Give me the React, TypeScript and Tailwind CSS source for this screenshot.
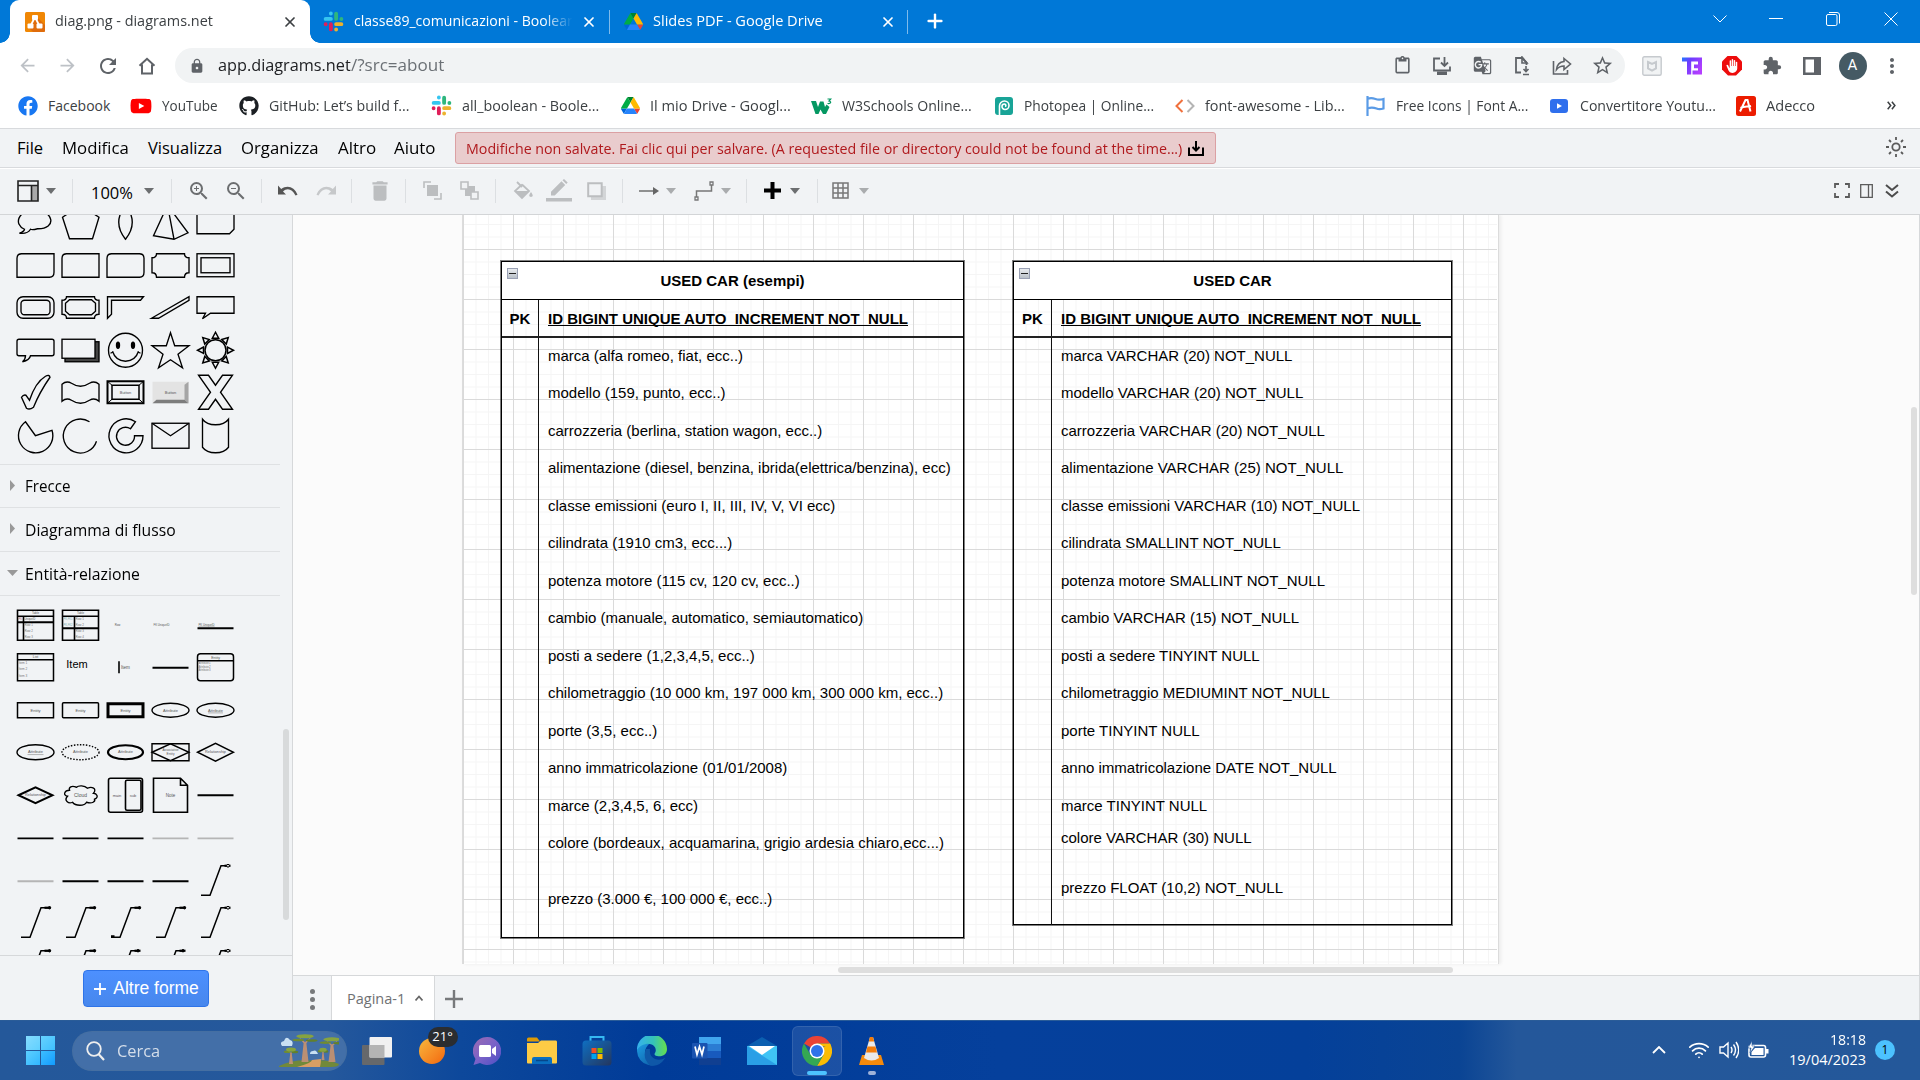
import React, { useLayoutEffect, useRef, useState } from "react";
import {
  MdArrowBack, MdArrowForward, MdRefresh, MdLock, MdContentPaste, MdStarBorder, MdExtension,
  MdZoomIn, MdZoomOut, MdDelete, MdGTranslate, MdMoreVert, MdBackHand,
} from "react-icons/md";
import { FaFacebook, FaYoutube, FaGithub } from "react-icons/fa";
import { X, Plus, Wifi } from "lucide-react";

/* Text squeezed or stretched to a known advance width. */
function Fit({ w, className = "", children }: { w: number; className?: string; children: React.ReactNode }) {
  const ref = useRef<HTMLSpanElement>(null);
  const [k, setK] = useState(1);
  useLayoutEffect(() => {
    if (ref.current) setK(w / ref.current.offsetWidth);
  }, [w]);
  return (
    <span className={"block shrink-0 whitespace-nowrap " + className} style={{ width: w }}>
      <span ref={ref} className="inline-block origin-left" style={{ transform: `scaleX(${k})` }}>
        {children}
      </span>
    </span>
  );
}

function Svg({ w, h, vb, className = "", children }: { w: number; h: number; vb: string; className?: string; children: React.ReactNode }) {
  return (
    <svg width={w} height={h} viewBox={vb} fill="none" className={"shrink-0 " + className}>
      {children}
    </svg>
  );
}

const Slack = () => (
  <Svg w={21} h={21} vb="0 0 24 24">
    <g strokeWidth="4.4" strokeLinecap="round">
      <path d="M9 2.8v.1M3 9h6" stroke="#36c5f0" />
      <path d="M15 3v6M21 9v.1" stroke="#2eb67d" />
      <path d="M15 15h6M15 21v.1" stroke="#ecb22e" />
      <path d="M9 15v6M3 15v.1" stroke="#e01e5a" />
    </g>
  </Svg>
);

const Drive = () => (
  <Svg w={19} h={17} vb="0 0 87.3 78">
    <path d="M6.6 66.85l3.85 6.65c.8 1.4 1.95 2.5 3.3 3.3L27.5 53H0c0 1.55.4 3.1 1.2 4.5z" fill="#0066da" />
    <path d="M43.65 25L29.9 1.2c-1.35.8-2.5 1.9-3.3 3.3L1.2 48.5A9.06 9.06 0 000 53h27.5z" fill="#00ac47" />
    <path d="M73.55 76.8c1.35-.8 2.5-1.9 3.3-3.3l9.25-16c.8-1.4 1.2-2.95 1.2-4.5H59.8l5.85 11.5z" fill="#ea4335" />
    <path d="M43.65 25L57.4 1.2C56.05.4 54.5 0 52.9 0H34.4c-1.6 0-3.15.45-4.5 1.2z" fill="#00832d" />
    <path d="M59.8 53H27.5L13.75 76.8c1.35.8 2.9 1.2 4.5 1.2h50.8c1.6 0 3.15-.45 4.5-1.2z" fill="#2684fc" />
    <path d="M73.4 26.5L60.7 4.5c-.8-1.4-1.95-2.5-3.3-3.3L43.65 25 59.8 53h27.45c0-1.55-.4-3.1-1.2-4.5z" fill="#ffba00" />
  </Svg>
);

/* ---------- Tab strip ---------- */
function TabStrip() {
  return (
    <header className="flex h-[43px] shrink-0 bg-[#0078d7] text-white">
      <div className="h-2.5 w-2.5 self-end bg-[radial-gradient(circle_at_0_0,#0078d7_9.5px,#fff_10px)]" />
      <div className="flex w-[300px] items-center rounded-t-[9px] bg-white pl-[15px]">
        <Svg w={20} h={20} vb="0 0 20 20">
          <rect width="20" height="20" rx="1.5" fill="#f08705" />
          <path d="M12 5l8 8v5.5a1.500 1.500 0 01-1.500 1.500H8l-5-5z" fill="#df6c0c" />
          <path d="M10 5L5.500 14M10 5l4.500 9" stroke="#fff" strokeWidth="1.800" />
          <rect x="7" y="3" width="6" height="5" rx="1" fill="#fff" />
          <rect x="2.500" y="11.500" width="6" height="5" rx="1" fill="#fff" />
          <rect x="11.500" y="11.500" width="6" height="5" rx="1" fill="#fff" />
        </Svg>
        <Fit w={158} className="ml-2.5 pb-px text-[14.5px] text-[#3c4043]">diag.png - diagrams.net</Fit>
        <X size={16} strokeWidth={2.6} className="ml-[69px] text-[#3c4043]" />
      </div>
      <div className="h-2.5 w-2.5 self-end bg-[radial-gradient(circle_at_100%_0,#0078d7_9.5px,#fff_10px)]" />
      <div className="flex w-[289px] items-center pl-[3px]">
        <Slack />
        <div className="ml-[10px] w-[223px] [mask-image:linear-gradient(to_right,#000_85%,transparent_98%)]">
          <Fit w={222} className="pb-px text-[14.5px]">classe89_comunicazioni - Boolean</Fit>
        </div>
        <X size={16} strokeWidth={2.6} className="ml-[4px]" />
      </div>
      <div className="mt-[10px] h-6 w-px bg-[#7fbbeb]" />
      <div className="flex w-[297px] items-center pl-[14px]">
        <Drive />
        <Fit w={170} className="ml-[10px] pb-px text-[14.5px]">Slides PDF - Google Drive</Fit>
        <X size={16} strokeWidth={2.6} className="ml-[57px]" />
      </div>
      <div className="mt-[10px] h-6 w-px bg-[#7fbbeb]" />
      <Plus size={22} strokeWidth={2.6} className="ml-[16px] mt-[10px]" />
      <div className="ml-auto flex h-[37px] items-center pr-[22px]">
        <Svg w={14} h={8} vb="0 0 14 8"><path d="M.5.5L7 7 13.500.5" stroke="#fff" /></Svg>
        <div className="ml-[42px] h-px w-[14px] bg-white" />
        <Svg w={14} h={14} vb="0 0 14 14" className="ml-[43px]">
          <rect x=".5" y="2.500" width="10.500" height="11" rx="1.500" stroke="#fff" />
          <path d="M3 .5h8a2.500 2.500 0 012.500 2.500v8.500" stroke="#fff" />
        </Svg>
        <Svg w={14} h={14} vb="0 0 14 14" className="ml-[44px]"><path d="M.5.5l13 13M13.500.5l-13 13" stroke="#fff" /></Svg>
      </div>
    </header>
  );
}

/* ---------- Address bar ---------- */
const cell = "flex w-10 shrink-0 items-center justify-center";
function AddressBar() {
  return (
    <div className="flex h-[45px] shrink-0 items-center bg-white pl-[7px] text-[#5f6368]">
      <div className={cell + " text-[#bdc1c6]"}><MdArrowBack size={21} /></div>
      <div className={cell + " text-[#bdc1c6]"}><MdArrowForward size={21} /></div>
      <div className={cell + " pl-px"}><MdRefresh size={24} /></div>
      <div className={cell}>
        <Svg w={18} h={18} vb="0 0 18 18"><path d="M1.500 8.800L9 1.800l7.500 7M4 7.500v9h10v-9" stroke="currentColor" strokeWidth="2" /></Svg>
      </div>
      <div className="ml-[8px] flex h-[35px] w-[1450px] items-center rounded-full bg-[#f1f3f4] pl-[14px]">
        <MdLock size={16} />
        <Fit w={133} className="ml-[13px] text-[16.5px] text-[#202124]">app.diagrams.net</Fit>
        <Fit w={93} className="text-[16.5px] text-[#6b7075]">/?src=about</Fit>
        <div className="ml-auto flex pr-[3px]">
          <div className={cell}><MdContentPaste size={19} /></div>
          <div className={cell}>
            <Svg w={20} h={20} vb="0 0 20 20"><path d="M8 2.500H2v12h16v-4" stroke="currentColor" strokeWidth="1.800" /><path d="M5 15.500h10V19H5z" fill="currentColor" /><path d="M12.500 1v8.500M9 6.500l3.500 3.500L16 6.500" stroke="currentColor" strokeWidth="1.800" /></Svg>
          </div>
          <div className={cell}><MdGTranslate size={19} /></div>
          <div className={cell}>
            <Svg w={18} h={20} vb="0 0 18 20"><path d="M8 16.500H3V2h6l4.500 4.500V9" stroke="currentColor" strokeWidth="1.800" /><path d="M9 1v6h5zM13 10v5M10.500 13l2.500 2.500 2.500-2.500M10 18.500h6" stroke="currentColor" strokeWidth="1.600" /></Svg>
          </div>
          <div className={cell}>
            <Svg w={20} h={20} vb="0 0 20 20"><path d="M1.500 5v13h14v-4" stroke="currentColor" strokeWidth="1.600" /><path d="M12 2.500l6.500 5.500-6.500 5.500v-3.500c-3.500 0-5.500 1-7.500 3.500.5-4.500 3-7.500 7.500-8z" stroke="currentColor" strokeWidth="1.600" /></Svg>
          </div>
          <div className={cell}><MdStarBorder size={23} /></div>
        </div>
      </div>
      <div className="ml-[7px] flex">
        <div className={cell}>
          <Svg w={20} h={20} vb="0 0 20 20"><rect x=".8" y=".8" width="18.400" height="18.400" rx="1.500" fill="#f1f3f4" stroke="#c6cace" strokeWidth="1.400" /><path d="M6 6l4 2 4-2v6.500l-4 2.200-4-2.200z" stroke="#c6cace" strokeWidth="2" /></Svg>
        </div>
        <div className={cell}>
          <Svg w={20} h={18} vb="0 0 20 18">
            <defs><linearGradient id="t3" x1="0" x2="1" y1="0" y2=".6"><stop stopColor="#1f7bff" /><stop offset=".35" stopColor="#6a3dff" /><stop offset="1" stopColor="#b43dff" /></linearGradient></defs>
            <path d="M0 .5h20v17h-9.500v-4H16v-2.300h-4V7.500h4V4.500H9.200v13H5v-13H0z" fill="url(#t3)" />
          </Svg>
        </div>
        <div className={cell}>
          <div className="flex h-5 w-5 items-center justify-center bg-[#ed0c0c] text-white [clip-path:polygon(30%_0,70%_0,100%_30%,100%_70%,70%_100%,30%_100%,0_70%,0_30%)]"><MdBackHand size={14} /></div>
        </div>
        <div className={cell}><MdExtension size={20} /></div>
        <div className={cell}>
          <Svg w={18} h={18} vb="0 0 18 18"><path d="M0 0h18v18H0zM2.500 2.500v13h8.500v-13z" fill="currentColor" fillRule="evenodd" /></Svg>
        </div>
        <div className={cell + " pl-px"}>
          <div className="flex h-7 w-7 items-center justify-center rounded-full bg-[#455a64] font-[Roboto] text-[15px] text-white">A</div>
        </div>
        <div className={cell + " pr-px"}><MdMoreVert size={24} /></div>
      </div>
    </div>
  );
}

/* ---------- Bookmarks ---------- */
function Bm({ iw, w, gap, children, text }: { iw: string; w: number; gap: string; children: React.ReactNode; text: string }) {
  return (
    <div className={"flex shrink-0 items-center " + gap}>
      <div className={"flex shrink-0 justify-center " + iw}>{children}</div>
      <Fit w={w} className="pb-px text-[14px]">{text}</Fit>
    </div>
  );
}
function Bookmarks() {
  return (
    <div className="flex h-[40px] shrink-0 items-center bg-white pb-[5px] pl-[8px] text-[#3c4043]">
      <Bm iw="w-10" gap="" w={62} text="Facebook"><FaFacebook size={20} className="text-[#1877f2]" /></Bm>
      <Bm iw="w-[42px]" gap="ml-[10px]" w={56} text="YouTube"><FaYoutube size={22} className="text-[#f00]" /></Bm>
      <Bm iw="w-10" gap="ml-[11px]" w={141} text="GitHub: Let’s build f..."><FaGithub size={20} className="text-[#1b1f23]" /></Bm>
      <Bm iw="w-[42px]" gap="ml-[10px]" w={137} text="all_boolean - Boole..."><Slack /></Bm>
      <Bm iw="w-10" gap="ml-[11px]" w={141} text="Il mio Drive - Googl..."><Drive /></Bm>
      <Bm iw="w-[42px]" gap="ml-[9px]" w={130} text="W3Schools Online...">
        <Svg w={21} h={16} vb="0 0 21 16">
          <path d="M0 3h5l2 6 2-5.500h3.500l1.500 5.500 1.500-2.500 3 2.500-3.500 7h-3L9.500 11.500 7.500 16h-3z" fill="#059862" />
          <path d="M16.500 1h3.200L18 3c2.500.2 2.300 3-1.500 2.500" stroke="#059862" strokeWidth="1.200" />
        </Svg>
      </Bm>
      <Bm iw="w-10" gap="ml-[12px]" w={130} text="Photopea | Online...">
        <Svg w={18} h={18} vb="0 0 18 18"><rect width="18" height="18" rx="3" fill="#18a497" /><path d="M4.500 18V9a5 5 0 015-5 4.500 4.500 0 014.500 4.500A4 4 0 0110 12.500 3 3 0 017 9.500c0-1.500 1-2.500 2.500-2.500S11.500 9 10 9.500" stroke="#fff" strokeWidth="1.600" /></Svg>
      </Bm>
      <Bm iw="w-10" gap="ml-[11px]" w={140} text="font-awesome - Lib...">
        <Svg w={20} h={14} vb="0 0 20 14"><path d="M7.500 1l-6 6 6 6" stroke="#f0703c" strokeWidth="2" /><path d="M12.500 1l6 6-6 6" stroke="#b4b4b4" strokeWidth="2" /></Svg>
      </Bm>
      <Bm iw="w-[42px]" gap="ml-[9px]" w={132} text="Free Icons | Font A...">
        <Svg w={19} h={20} vb="0 0 19 20"><path d="M1.500 0v20M1.500 3c3-1.500 5-1 8 0 3 1.200 5 .8 8 0v9.500c-3 1-5 1-7 0-3-1-5-1.500-9 0" stroke="#5a9be6" strokeWidth="2.200" /></Svg>
      </Bm>
      <Bm iw="w-[42px]" gap="ml-[10px]" w={136} text="Convertitore Youtu...">
        <Svg w={18} h={14} vb="0 0 18 14"><rect width="18" height="14" rx="3" fill="#2f6fed" /><path d="M7 4.200v5.600L12 7z" fill="#fff" /></Svg>
      </Bm>
      <Bm iw="w-10" gap="ml-[10px]" w={49} text="Adecco">
        <Svg w={20} h={20} vb="0 0 20 20"><rect width="20" height="20" rx="2.500" fill="#ec1c00" /><path d="M4 15.500L9.500 4h2l3 11.500M4.500 12c4-2 7-1 10.500-2" stroke="#fff" strokeWidth="2" /></Svg>
      </Bm>
      <Svg w={9} h={9} vb="0 0 9 9" className="ml-auto mr-[24px]"><path d="M.7.7l3 3.800-3 3.800M4.900.7l3 3.800-3 3.800" stroke="#3c4043" strokeWidth="1.500" /></Svg>
    </div>
  );
}

/* ---------- Menu bar ---------- */
function MenuBar() {
  return (
    <div className="flex h-[40px] shrink-0 items-center border-y border-[#d8dadd] bg-[#f1f3f5] pl-[17px] text-[16.500px] text-black">
      <Fit w={26}>File</Fit>
      <Fit w={67} className="ml-[19px]">Modifica</Fit>
      <Fit w={74} className="ml-[19px]">Visualizza</Fit>
      <Fit w={78} className="ml-[19px]">Organizza</Fit>
      <Fit w={38} className="ml-[19px]">Altro</Fit>
      <Fit w={42} className="ml-[18px]">Aiuto</Fit>
      <div className="ml-[19px] flex h-8 w-[761px] items-center rounded-[3px] border border-[#dba0a3] bg-[#e9cccd] pl-[10px]">
        <Fit w={716} className="pt-px text-[14.500px] text-[#b0191d]">Modifiche non salvate. Fai clic qui per salvare. (A requested file or directory could not be found at the time...)</Fit>
        <Svg w={16} h={15} vb="0 0 16 15" className="ml-[6px]"><path d="M1 6.500V14h14V6.500M8 0v9M4.500 6L8 9.500 11.500 6" stroke="#000" strokeWidth="2" /></Svg>
      </div>
      <Svg w={20} h={20} vb="0 0 20 20" className="mb-[2px] ml-auto mr-[14px]">
        <circle cx="10" cy="10" r="3.700" stroke="#5a5a5a" strokeWidth="1.800" />
        <path d="M10 0v3M10 17v3M0 10h3M17 10h3M3 3l2 2M15 15l2 2M3 17l2-2M15 5l2-2" stroke="#5a5a5a" strokeWidth="1.800" />
      </Svg>
    </div>
  );
}

/* ---------- Toolbar ---------- */
const Caret = ({ c }: { c: string }) => (
  <Svg w={10} h={6} vb="0 0 10 6" className={c}><path d="M0 0h10L5 6z" fill="currentColor" /></Svg>
);
const Sep = ({ c }: { c: string }) => <div className={"h-6 w-px shrink-0 bg-[#dcdfe2] " + c} />;

function Toolbar() {
  return (
    <div className="flex h-[47px] shrink-0 items-center border-b border-t border-b-[#d3d5d7] border-t-white bg-[#f1f3f5] pb-[2px] pl-[17px] text-[#6c6e70]">
      <Svg w={22} h={22} vb="0 0 22 22"><rect x="15" y="5" width="6" height="16" fill="#a9a9a9" /><path d="M1 1h20v20H1zM1 5.500h20M14.500 5.500V21" stroke="#222" strokeWidth="1.600" /></Svg>
      <Caret c="ml-[7px]" />
      <Sep c="ml-[16px]" />
      <Fit w={42} className="ml-[18px] pt-[6px] text-[16.500px] text-black">100%</Fit>
      <Caret c="ml-[11px]" />
      <Sep c="ml-[17px]" />
      <MdZoomIn size={24} className="ml-[15px] shrink-0" />
      <MdZoomOut size={24} className="ml-[13px] shrink-0" />
      <Sep c="ml-[13px]" />
      <Svg w={20} h={13} vb="0 0 20 12" className="ml-[16px]"><path d="M0 1v9h8L5 7c4-4 9-3 12.500 4l2-.7C16.500 2 9 0 3.200 4.500z" fill="#555" /></Svg>
      <Svg w={20} h={13} vb="0 0 20 12" className="ml-[18px]"><path d="M20 1v9h-8l3-3C11 3 6 4 2.500 11l-2-.7C3.500 2 11 0 16.800 4.500z" fill="#c6c8ca" /></Svg>
      <Sep c="ml-[15px]" />
      <div className="flex items-center text-[#bcbec0]">
        <MdDelete size={26} className="ml-[15px]" />
        <Sep c="ml-[12px]" />
        <Svg w={19} h={19} vb="0 0 19 19" className="ml-[17px]"><rect x="4" y="4" width="11" height="11" fill="currentColor" /><path d="M1 7V1h7M18 12v6h-7" stroke="currentColor" strokeWidth="1.600" /></Svg>
        <Svg w={19} h={19} vb="0 0 19 19" className="ml-[18px]"><path d="M5 5h10v10H5z" fill="currentColor" /><path d="M1 1h7v7H1zM11 11h7v7h-7z" stroke="currentColor" strokeWidth="1.600" fill="#f1f3f5" /></Svg>
        <Sep c="ml-[16px]" />
        <Svg w={20} h={19} vb="0 0 20 19" className="ml-[17px]"><path d="M4 1l5 5M9 3.500L2 10l7 7 7-7-7-6.500" stroke="currentColor" strokeWidth="1.800" /><path d="M2 10h14l-7 7zM18 11c3 4 1.500 5 0 5s-3-1 0-5z" fill="currentColor" /></Svg>
        <Svg w={26} h={23} vb="0 0 26 23" className="ml-[13px]"><path d="M0 19h26v3.500H0zM5 16.500v-3.700L15.500 2.300l3.700 3.700L8.700 16.500zM16.500 1.300L18 0l3.700 3.500-1.500 1.500z" fill="currentColor" /></Svg>
        <Svg w={19} h={18} vb="0 0 19 18" className="ml-[15px]"><path d="M4 4h15v14H4z" fill="#d3d5d7" /><path d="M1.200 1.200h13.500v13H1.200z" stroke="currentColor" strokeWidth="2" fill="#f1f3f5" /></Svg>
        <Sep c="ml-[16px]" />
      </div>
      <Svg w={20} h={8} vb="0 0 20 8" className="ml-[16px]"><path d="M0 4h17" stroke="#777" strokeWidth="1.600" /><path d="M14 0l6 4-6 4z" fill="#666" /></Svg>
      <Caret c="ml-[7px] text-[#aaacae]" />
      <Svg w={20} h={20} vb="0 0 20 20" className="ml-[18px]"><path d="M2.500 16v-6h15V4" stroke="#777" strokeWidth="1.500" /><path d="M1 16h3v3H1zM16 1h3v3h-3z" stroke="#777" strokeWidth="1.300" /></Svg>
      <Caret c="ml-[7px] text-[#aaacae]" />
      <Sep c="ml-[15px]" />
      <Svg w={17} h={17} vb="0 0 17 17" className="ml-[17px]"><path d="M8.500 0v17M0 8.500h17" stroke="#000" strokeWidth="4" /></Svg>
      <Caret c="ml-[9px]" />
      <Sep c="ml-[17px]" />
      <Svg w={17} h={17} vb="0 0 17 17" className="ml-[14px]"><path d="M1 1h15v15H1zM6 1v15M11 1v15M1 6h15M1 11h15" stroke="#777" strokeWidth="1.500" /></Svg>
      <Caret c="ml-[10px] text-[#aaacae]" />
      <div className="ml-auto flex items-center pr-[21px]">
        <Svg w={16} h={15} vb="0 0 16 15"><path d="M1 5V1h4M11 1h4v4M15 10v4h-4M5 14H1v-4" stroke="#5c5c5c" strokeWidth="1.800" /></Svg>
        <Svg w={13} h={14} vb="0 0 13 14" className="ml-[10px]"><path d="M.7.7h11.600v12.600H.7zM8.500 1v12" stroke="#5c5c5c" strokeWidth="1.300" /></Svg>
        <Svg w={14} h={14} vb="0 0 14 14" className="ml-[12px]"><path d="M1 1l6 5 6-5M1 7.500l6 5 6-5" stroke="#4c4c4c" strokeWidth="2" /></Svg>
      </div>
    </div>
  );
}

/* ---------- Shape palette ---------- */
const T = ({ x = 0, y = 1.500, s = 4, u = false, a = "middle", c = "#555", children }: { x?: number; y?: number; s?: number; u?: boolean; a?: "start" | "middle"; c?: string; children: string }) => (
  <text x={x} y={y} fontSize={s} fill={c} stroke="none" textAnchor={a} textDecoration={u ? "underline" : undefined}>{children}</text>
);

const sunRays = Array.from({ length: 8 }, (_, i) => <path key={i} d="M-3.200 -12L0 -18L3.200 -12Z" transform={`rotate(${i * 45})`} />);

const basic: React.ReactNode[] = [
  <path d="M-11 7C-22 2-18-12 0-12S22 7 2 6.500Q-3 8-5 7Q-8 12-16 11Q-11 9-11 7Z" />,
  <path d="M-18-5L0-17 18.500-5 12 16.500H-11Z" />,
  <path d="M0-17Q13.500 0 0 17Q-13.500 0 0-17Z" />,
  <path d="M-3-17L-17 13.500 3.500 17 17.500 10.500ZM-3-17L3.500 17" />,
  <path d="M-18.500-11H18.500V7L14 11.500H-18.500Z" />,
  <path d="M-14-11.500H18.500V7Q18.500 12 14 12H-18.500V-7Q-18.500-11.500-14-11.500Z" />,
  <path d="M-14-11.500H18.500V12H-18.500V-7Q-18.500-11.500-14-11.500Z" />,
  <path d="M-14-11.500H14Q18.500-11.500 18.500-7V7Q18.500 12 14 12H-18.500V-7Q-18.500-11.500-14-11.500Z" />,
  <path d="M-14-11.500H14Q14-7.500 18.500-7.500V7.500Q14 7.500 14 12H-14Q-14 7.500-18.500 7.500V-7.500Q-14-7.500-14-11.500Z" />,
  <g><rect x="-18.500" y="-11.500" width="37" height="23" /><rect x="-14.500" y="-7.500" width="29" height="15" /></g>,
  <g><rect x="-18.500" y="-10.500" width="37" height="21.500" rx="6" /><rect x="-14.500" y="-7" width="29" height="14.500" rx="3.500" /></g>,
  <g><path d="M-14-10.500H14Q14-7 18.500-7V7Q14 7 14 11H-14Q-14 7-18.500 7V-7Q-14-7-14-10.500Z" /><path d="M-11-7.500H11L15-4V4L11 7.500H-11L-15 4V-4Z" /></g>,
  <path d="M-18-10.500H18L15-7H-14V7L-18 11Z" />,
  <path d="M-19 11L18.500-10.500V-7L-12 11Z" />,
  <path d="M-18.500-10.500H18.500V6H-5L-13 11.500-10 6H-18.500Z" />,
  <path d="M-16.500-11H16.500Q18.500-11 18.500-9V3.500Q18.500 5.500 16.500 5.500H-5Q-6 10-13 11.500Q-10 9-10 5.500H-16.500Q-18.500 5.500-18.500 3.500V-9Q-18.500-11-16.500-11Z" />,
  <g><rect x="-15.500" y="-8.500" width="34" height="20" fill="#444" /><rect x="-18.500" y="-11" width="33" height="19" fill="#f1f3f5" /></g>,
  <g><circle r="17" cy="0" /><ellipse cx="-7.500" cy="-5" rx="1.500" ry="3" fill="#000" /><ellipse cx="7.500" cy="-5" rx="1.500" ry="3" fill="#000" /><path d="M-13 1Q-10 10.500 0 11Q10 10.500 13 1M-15 3L-12 1.500M15 3L12 1.500" /></g>,
  <path d="M0-17.500L4.200-4.500H18.500L7.500 4 12 17.500 0 9.500-12 17.500-7.500 4-18.500-4.500H-4.200Z" />,
  <g strokeWidth="1.500">{sunRays}<circle r="10.500" /></g>,
  <path d="M-14 5Q-12 2-9.500 3L-6 8Q0-10 10-16Q14-18 14.500-15Q4 0-2 15Q-6 18-9 16Z" />,
  <path d="M-18.500-8Q-14-12-9-9Q0-3 9-9Q14-12 18.500-8V9Q14 5 9 8Q0 14-9 8Q-14 5-18.500 9Z" />,
  <g strokeWidth="2"><rect x="-18" y="-11" width="36" height="22" /><rect x="-13.500" y="-7" width="27" height="14" strokeWidth="1.500" /><path d="M-18-11l4.500 4M18-11l-4.500 4M-18 11l4.500-4M18 11l-4.500-4" strokeWidth="1" /><T y={1.500}>Button</T></g>,
  <g stroke="none"><rect x="-18" y="-10.500" width="36" height="21.500" fill="#e3e3e3" /><path d="M18-10.500V11L14 7.500V-7.500Z" fill="#a5a5a5" /><path d="M-18 11H18L14 7.500H-14Z" fill="#7d7d7d" /><T y={1.500}>Button</T></g>,
  <path d="M-17-17H-7L0-7 7-17H17L5 0 17 17H7L0 7-7 17H-17L-5 0Z" />,
  <path d="M0 0.500L-10-13.500A17.200 17.200 0 1 0 16.500-5Z" />,
  <path d="M9-13.500A17 17 0 1 0 16 6" />,
  <path d="M10-13.500A17 17 0 1 0 17.500 0.500H9A9 9 0 1 1 5-6.500Z" />,
  <g><rect x="-18.500" y="-12" width="37" height="25" /><path d="M-18.500-12L0 .5 18.500-12" /></g>,
  <path d="M-13-16Q-9-10.500 0-10.500T13-16V12Q9 17.500 0 17.500T-13 12Z" />,
];

const hline = (y = 0, w = 1.800, c = "#000") => <path d={`M-18 ${y}H18`} stroke={c} strokeWidth={w} />;
const zig = (end: "dot" | "two" | "ring", both = false) => (
  <g>
    <path d="M-14.500 15H-5.500L5.500-14.500H12.500" strokeWidth="1.500" />
    <path d="M9-14.500H15" strokeWidth="2.200" />
    <circle cx={end === "dot" ? 14 : 12.500} cy="-14.500" r={end === "ring" ? 1.400 : 1.200} fill={end === "ring" ? "#f1f3f5" : "#000"} strokeWidth="1" />
    {both && <path d="M-14.500 14.300H-11" strokeWidth="2.600" />}
  </g>
);

const er: React.ReactNode[] = [
  <g strokeWidth="1.600"><path d="M-18-15H18V15H-18Z" /><path d="M-18-9H18M-12-9V15" /><path d="M-18-3H18" strokeWidth="2" /><T y={-10.800} s={3}>Table</T><T x={-17} y={-5} s={2.600} a="start" c="#a66">PK</T><T x={-11} y={-5} s={2.600} u a="start">UniqueID</T><T x={-11} y={0.500} s={3} a="start" c="#777">Row 1</T><T x={-11} y={6.500} s={3} a="start" c="#777">Row 2</T><T x={-11} y={12.500} s={3} a="start" c="#777">Row 3</T></g>,
  <g strokeWidth="1.600"><path d="M-18-15H18V15H-18Z" /><path d="M-18-9H18M-6-9V15" /><path d="M-18 3H18" strokeWidth="2" /><T y={-10.800} s={3}>Table</T><T x={-17} y={-5} s={2.600} a="start" c="#7aa">PK,FK1</T><T x={-17} y={1} s={2.600} a="start" c="#7aa">PK,FK2</T><T x={-5} y={-5} s={3} a="start" c="#777">Row 1</T><T x={-5} y={1} s={3} a="start" c="#777">Row 2</T><T x={-5} y={6.500} s={3} a="start" c="#777">Row 3</T><T x={-5} y={12.500} s={3} a="start" c="#777">Row 4</T></g>,
  <T x={-8} y={0.500} s={2.800}>Row</T>,
  <T x={-9} y={0.500} s={2.800}>FK   UniqueID</T>,
  <g><path d="M-18 3H18" strokeWidth="1.800" /><T x={-9} y={0.500} s={2.800} u>PK UniqueID</T></g>,
  <g strokeWidth="1.500"><path d="M-18-13.500H18V13.500H-18ZM-18-7.500H18" /><T y={-9.200} s={3.500}>List</T><T x={-17} y={-3} s={3.200} a="start" c="#777">Item 1</T><T x={-17} y={3} s={3.200} a="start" c="#777">Item 2</T><T x={-17} y={10} s={3.200} a="start" c="#777">Item 3</T></g>,
  <T x={-3.500} y={0.500} s={11} c="#000">Item</T>,
  <g><path d="M-6.500-6V6" strokeWidth="1.600" /><T x={-4.500} y={2} s={4.600} a="start">Item</T></g>,
  hline(0.500),
  <g strokeWidth="1.500"><rect x="-18" y="-13.500" width="36" height="27" rx="3" /><path d="M-18-6.500H18" /><T y={-8.500} s={3.500}>Entity</T><T x={-17} y={-3} s={2.800} a="start" c="#777">Attribute1</T><T x={-17} y={0.500} s={2.800} a="start" c="#777">Attribute2</T><T x={-17} y={4} s={2.800} a="start" c="#777">Attribute3</T></g>,
  <g strokeWidth="1.500"><rect x="-18" y="-7.500" width="36" height="15" /><T>Entity</T></g>,
  <g strokeWidth="1.500"><rect x="-18" y="-7.500" width="36" height="15" rx="1" /><T>Entity</T></g>,
  <g><rect x="-17.500" y="-6.500" width="35" height="13" strokeWidth="3" /><T>Entity</T></g>,
  <g strokeWidth="1.400"><ellipse rx="18.500" ry="7" /><T>Attribute</T></g>,
  <g strokeWidth="1.400"><ellipse rx="18.500" ry="7" /><T u>Attribute</T></g>,
  <g strokeWidth="1.400"><ellipse rx="18.500" ry="7.500" /><T y={1}>Attribute</T><path d="M-8 2.300H8" stroke="#999" strokeWidth=".7" /></g>,
  <g strokeWidth="1.400"><ellipse rx="18.500" ry="7.500" strokeDasharray="1.500 1.500" /><T y={1}>Attribute</T></g>,
  <g strokeWidth="2.200"><ellipse rx="17.500" ry="7" /><T y={1}>Attribute</T></g>,
  <g strokeWidth="1.400"><path d="M-18.500-8.500H18.500V8.500H-18.500Z" /><path d="M-18.500 0L0-8.500 18.500 0 0 8.500Z" /><T y={-1} s={3.200}>Associative</T><T y={3} s={3.200}>Entity</T></g>,
  <g strokeWidth="1.400"><path d="M-18 0L0-9 18 0 0 9Z" /><T y={1} s={3.800}>Relationship</T></g>,
  <g strokeWidth="2"><path d="M-17 0L0-8 17 0 0 8Z" /><T y={1} s={3.800}>Relationship</T></g>,
  <g><path d="M-11-5C-16-5-18 0-13 1C-17 5-12 9-8 7C-5 11 4 11 6 7C12 9 15 6 14 4C19 2 16-2 13-2C17-7 11-9 7-7C4-10-2-10-4-8C-9-10-12-8-11-5Z" /><T s={5}>Cloud</T></g>,
  <g strokeWidth="1.600"><rect x="-17" y="-17" width="34" height="34" rx="2" /><rect x="0" y="-15" width="15.500" height="30" rx="1.500" /><T x={-8.500}>main</T><T x={7.500}>sub</T></g>,
  <g strokeWidth="1.600"><path d="M-17-17H10L17-10V17H-17ZM10-17V-10H17" /><T s={4.500}>Note</T></g>,
  hline(),
  hline(1.200), hline(1.200), hline(1.200), hline(1.200, 1.800, "#b5b5b5"), hline(1.200, 1.800, "#b5b5b5"),
  hline(1, 1.800, "#b5b5b5"), hline(1, 2.200), hline(1, 2.200), hline(1, 2.200),
  zig("ring"),
  zig("dot"), zig("dot"), zig("dot", true), zig("dot"), zig("ring"),
  zig("dot"), zig("dot"), zig("two"), zig("two"), zig("ring"),
];

function Palette({ items }: { items: React.ReactNode[] }) {
  return (
    <div className="grid w-[225px] shrink-0 auto-rows-[42.5px] grid-cols-5 font-['Liberation_Sans']">
      {items.map((s, i) => (
        <svg key={i} viewBox="-22.5 -21.25 45 42.5" className="h-[42.5px] w-[45px] overflow-visible" fill="none" stroke="#000" strokeWidth="1.350">{s}</svg>
      ))}
    </div>
  );
}

function Section({ title, w, open = false, c }: { title: string; w: number; open?: boolean; c: string }) {
  return (
    <div className={"flex w-[280px] shrink-0 items-center border-t border-[#dfe1e3] pl-[7px] " + c}>
      <div className="flex w-[18px] shrink-0 pb-[3px]">
        {open
          ? <Svg w={11} h={6} vb="0 0 11 6"><path d="M0 0h11L5.500 6z" fill="#999" /></Svg>
          : <Svg w={9} h={11} vb="-3 0 9 11"><path d="M0 0v11l5-5.500z" fill="#999" /></Svg>}
      </div>
      <Fit w={w} className="text-[15.500px] font-medium text-black">{title}</Fit>
    </div>
  );
}

function Sidebar() {
  return (
    <aside className="flex w-[293px] shrink-0 flex-col border-r border-[#d6d8da] bg-[#f1f3f5]">
      <div className="flex h-[740px] shrink-0 overflow-hidden">
        <div className="flex w-[283px] flex-col">
          <div className="-mt-[13.75px] h-[263px] shrink-0 pl-[13px]"><Palette items={basic} /></div>
          <Section title="Frecce" w={46} c="h-[43px] pt-[1px]" />
          <Section title="Diagramma di flusso" w={151} c="h-[44px] pt-[1px]" />
          <Section title="Entità-relazione" w={115} open c="h-[44px] pt-[1px]" />
          <div className="w-[280px] border-t border-[#dfe1e3] pl-[13px] pt-[7.500px]"><Palette items={er} /></div>
        </div>
        <div className="mt-[514px] h-[191px] w-[6px] rounded-full bg-[#d8dadb]" />
      </div>
      <div className="flex flex-1 justify-center border-t border-[#d6d8da] pt-[14px]">
        <button className="flex h-[37px] w-[126px] items-center rounded-[4px] border border-[#2f74e8] bg-gradient-to-b from-[#4d90fe] to-[#4787ed] pl-[10px] font-['Liberation_Sans'] text-[17.500px] text-white">
          <Svg w={12} h={12} vb="0 0 12 12"><path d="M6 0v12M0 6h12" stroke="#fff" strokeWidth="1.800" /></Svg>
          <Fit w={86} className="ml-[7px] pb-px">Altre forme</Fit>
        </button>
      </div>
    </aside>
  );
}

/* ---------- Canvas ---------- */
const left = [
  "marca (alfa romeo, fiat, ecc..)", "modello (159, punto, ecc..)", "carrozzeria (berlina, station wagon, ecc..)",
  "alimentazione (diesel, benzina, ibrida(elettrica/benzina), ecc)", "classe emissioni (euro I, II, III, IV, V, VI ecc)",
  "cilindrata (1910 cm3, ecc...)", "potenza motore (115 cv, 120 cv, ecc..)", "cambio (manuale, automatico, semiautomatico)",
  "posti a sedere (1,2,3,4,5, ecc..)", "chilometraggio (10 000 km, 197 000 km, 300 000 km, ecc..)", "porte (3,5, ecc..)",
  "anno immatricolazione (01/01/2008)", "marce (2,3,4,5, 6, ecc)", "colore (bordeaux, acquamarina, grigio ardesia chiaro,ecc...)",
  "prezzo (3.000 €, 100 000 €, ecc..)",
];
const right = [
  "marca VARCHAR (20) NOT_NULL", "modello VARCHAR (20) NOT_NULL", "carrozzeria VARCHAR (20) NOT_NULL",
  "alimentazione VARCHAR (25) NOT_NULL", "classe emissioni VARCHAR (10) NOT_NULL", "cilindrata SMALLINT NOT_NULL",
  "potenza motore SMALLINT NOT_NULL", "cambio VARCHAR (15) NOT_NULL", "posti a sedere TINYINT NULL",
  "chilometraggio MEDIUMINT NOT_NULL", "porte TINYINT NULL", "anno immatricolazione DATE NOT_NULL", "marce TINYINT NULL",
  "colore VARCHAR (30) NULL", "prezzo FLOAT (10,2) NOT_NULL",
];

function Entity({ title, rows, c, pk, tall, last }: { title: string; rows: string[]; c: string; pk: string; tall: string; last: string }) {
  return (
    <div className={"absolute flex flex-col border border-black font-['Liberation_Sans'] text-[15px] text-black outline outline-[0.5px] outline-[#000]/50 " + c}>
      <div className="relative flex h-[37px] shrink-0 items-center justify-center bg-white font-bold">
        <span className="pt-px">{title}</span>
        <div className="absolute left-[5px] top-[6px] flex h-[11px] w-[11px] items-center justify-center border border-[#9aa1b5] bg-gradient-to-b from-[#e9ecef] to-[#b9c0c8]">
          <div className="h-px w-[7px] bg-[#222]" />
        </div>
      </div>
      <div className="flex h-[39px] shrink-0 border-b-2 border-t border-b-[#222] border-t-black font-bold">
        <div className={"flex items-center justify-center border-r-[1.500px] border-[#111] pt-[2px] " + pk}>PK</div>
        <div className="flex items-center whitespace-nowrap pl-[9px] pt-[2px] underline underline-offset-1 [text-decoration-skip-ink:none]">ID BIGINT UNIQUE AUTO_INCREMENT NOT_NULL</div>
      </div>
      <div className="flex flex-1">
        <div className={"shrink-0 border-r-[1.500px] border-[#111] " + pk} />
        <div className="-mt-px flex flex-col pl-[9px]">
          {rows.map((r, i) => (
            <div key={i} className={"flex shrink-0 items-center whitespace-nowrap " + (i === 13 ? tall : i === 14 ? last : "h-[37.5px]")}>{r}</div>
          ))}
        </div>
      </div>
    </div>
  );
}

function Canvas() {
  return (
    <div className="relative h-[760px] shrink-0 overflow-hidden bg-[#fbfbfb]">
      <div className="absolute left-[169px] top-0 h-[749px] w-[1037px] border-x border-[#dcdcdc] bg-white shadow-[2px_0_3px_#ececec]">
        <div className="h-full w-[1034px] bg-[linear-gradient(#dadada_1px,transparent_1px),linear-gradient(90deg,#dadada_1px,transparent_1px),linear-gradient(#f5f5f5_1px,transparent_1px),linear-gradient(90deg,#f5f5f5_1px,transparent_1px)] bg-[length:50px_50px,50px_50px,12.5px_12.5px,12.5px_12.5px] bg-[position:0_34px,0_0,0_34px,0_0]" />
      </div>
      <Entity title="USED CAR (esempi)" rows={left} c="left-[208px] top-[46px] h-[677px] w-[463px]" pk="w-[37px]" tall="h-[37.5px]" last="h-[75px]" />
      <Entity title="USED CAR" rows={right} c="left-[720px] top-[46px] h-[664px] w-[439px]" pk="w-[38px]" tall="h-[27px]" last="h-[73px]" />
      <div className="absolute left-[545px] top-[752px] h-[6px] w-[615px] rounded-full bg-[#dedede]" />
      <div className="absolute right-[2px] top-[192px] h-[188px] w-[6px] rounded-full bg-[#dedede]" />
    </div>
  );
}

function PageBar() {
  return (
    <div className="flex flex-1 border-t border-[#d6d8da] bg-[#f1f3f5] text-[#6f7173]">
      <div className="flex w-[38px] flex-col items-center justify-center gap-[3px] pt-[2px]">
        <div className="h-[5px] w-[5px] rounded-full bg-[#77797b]" />
        <div className="h-[5px] w-[5px] rounded-full bg-[#77797b]" />
        <div className="h-[5px] w-[5px] rounded-full bg-[#77797b]" />
      </div>
      <div className="flex w-[104px] items-center border-x border-[#d6d8da] bg-white pl-[15px] pt-[2px]">
        <Fit w={58} className="text-[14.500px]">Pagina-1</Fit>
        <Svg w={8} h={6} vb="0 0 8 6" className="mb-[3px] ml-[10px]"><path d="M.5 5.500L4 1.500l3.500 4" stroke="#666" strokeWidth="1.700" /></Svg>
      </div>
      <Svg w={18} h={18} vb="0 0 18 18" className="ml-[10px] mt-[14px]"><path d="M9 0v18M0 9h18" stroke="#77797b" strokeWidth="2.400" /></Svg>
    </div>
  );
}

/* ---------- Taskbar ---------- */
const tb = "flex w-[55px] shrink-0 items-center justify-center";
function Tree({ x, y, h, w }: { x: number; y: number; h: number; w: number }) {
  return (
    <g transform={`translate(${x} ${y})`}>
      <path d={`M${-w} 0L${-w * 0.4} ${-h * 0.75}L${-w * 1.8} ${-h}L0 ${-h * 0.8}L${w * 1.8} ${-h}L${w * 0.4} ${-h * 0.75}L${w} 0Z`} fill="#bb8f73" />
      <ellipse cx={-w * 1.9} cy={-h * 0.88} rx={w * 1.7} ry="1.300" fill="#6f8c31" />
      <ellipse cx={w * 1.9} cy={-h * 0.86} rx={w * 1.7} ry="1.300" fill="#62802c" />
      <ellipse cx="0" cy={-h * 1.03} rx={w * 2.500} ry="2" fill="#86a340" />
    </g>
  );
}
function Taskbar() {
  return (
    <footer className="flex h-[60px] shrink-0 items-center border-t border-[#2a5c98] bg-[linear-gradient(90deg,#24589a_0%,#25589c_17%,#0d489b_24%,#003b98_34%,#05409c_52%,#04409a_68%,#0a4494_76%,#24579a_79%,#24589a_100%)] pl-[26px] text-white">
      <div className="grid h-[29px] w-[29px] grid-cols-2 gap-px">
        <div className="bg-gradient-to-br from-[#84dcff] to-[#5fd0ff]" /><div className="bg-gradient-to-br from-[#66d2ff] to-[#3dbfff]" />
        <div className="bg-gradient-to-br from-[#5bcfff] to-[#2fb6ff]" /><div className="bg-gradient-to-br from-[#3cbdff] to-[#0f9cff]" />
      </div>
      <div className="ml-[17px] flex h-10 w-[275px] items-center overflow-hidden rounded-full border border-[#47709f]/60 bg-[#436fa8] pl-[13px]">
        <Svg w={19} h={20} vb="0 0 19 20"><circle cx="8" cy="8" r="6.800" stroke="#eee" strokeWidth="1.800" /><path d="M12.500 13l5.500 6" stroke="#eee" strokeWidth="2.200" /></Svg>
        <Fit w={43} className="ml-[12px] text-[16px] text-[#d5deea]">Cerca</Fit>
        <Svg w={60} h={34} vb="0 0 60 34" className="ml-auto mr-[7px]">
          <path d="M0 32Q14 25 32 26.500Q50 25 60 30Q60 33 52 33H0Z" fill="#71893a" />
          <path d="M18 33Q33 29 33 26L42 25Q42 29 41 33Z" fill="#d99e63" />
          <path d="M3 12q-3-4 2-5 2-6 6-1 4 1 2 6zM31 20q0-3 3-3 3-2 5 3z" fill="#c9e0f2" />
          <Tree x={12} y={30} h={14} w={2} /><Tree x={26} y={28} h={25} w={3.500} /><Tree x={44} y={26} h={10} w={1.500} /><Tree x={53} y={28} h={22} w={3.500} />
        </Svg>
      </div>
      <div className="flex h-full pl-[2px]">
        <div className={tb}>
          <Svg w={30} h={28} vb="0 0 30 28"><rect y="8" width="22.500" height="20" rx="1" fill="#66686b" /><rect x="7.500" width="22.500" height="20.500" rx="1" fill="#f1f1f1" /><path d="M7.500 8h15v12.500h-15z" fill="#b4b4b4" /></Svg>
        </div>
        <div className={tb}>
          <div className="relative flex h-[26px] w-[26px] rounded-full bg-gradient-to-br from-[#f6b73c] to-[#f2660a]">
            <div className="absolute -right-[13px] -top-[11px] flex h-[20px] w-[30px] items-center justify-center rounded-full bg-[#2b2d30] text-[13px] leading-none">21°</div>
          </div>
        </div>
        <div className={tb}>
          <Svg w={28} h={28} vb="0 0 28 28">
            <defs><linearGradient id="chat" x1="0" x2="1" y1="0" y2="1"><stop stopColor="#9b6bb0" /><stop offset=".5" stopColor="#7a62c8" /><stop offset="1" stopColor="#4b4fc4" /></linearGradient></defs>
            <path d="M14 0a14 14 0 11-7 26l-6.500 2L2.500 22A14 14 0 0114 0z" fill="url(#chat)" /><rect x="6" y="8" width="12" height="12" rx="1.500" fill="#fff" /><path d="M19 12l4-3v10l-4-3z" fill="#fff" />
          </Svg>
        </div>
        <div className={tb}>
          <Svg w={30} h={28} vb="0 0 30 28"><path d="M0 2q0-1.500 1.500-1.500H10l3 4H0z" fill="#dd9a05" /><path d="M0 6h11l3-2.500h15q1 0 1 1.500v20.500q0 1-1 1H1q-1 0-1-1z" fill="#fdcb45" /><path d="M5 27v-5q0-2 2-2h16q2 0 2 2v5z" fill="#0a6fc0" /><path d="M9 23.500h12" stroke="#06468a" strokeWidth="1.500" /></Svg>
        </div>
        <div className={tb}>
          <Svg w={30} h={30} vb="0 0 30 30">
            <defs><linearGradient id="store" x1="0" x2="1" y1="0" y2="1"><stop stopColor="#0f6fc2" /><stop offset="1" stopColor="#24365e" /></linearGradient></defs>
            <path d="M8.500 6V1h13v5" stroke="#35b8f2" strokeWidth="2" /><rect x=".5" y="4.500" width="29" height="25" rx="3.500" fill="url(#store)" /><path d="M9.500 12h5v5h-5z" fill="#f25022" /><path d="M15.500 12h5v5h-5z" fill="#7fba00" /><path d="M9.500 18h5v5h-5z" fill="#00a4ef" /><path d="M15.500 18h5v5h-5z" fill="#ffb900" />
          </Svg>
        </div>
        <div className={tb}>
          <Svg w={30} h={30} vb="0 0 30 30">
            <defs>
              <linearGradient id="e1" x1="0" x2="1"><stop stopColor="#36b0ee" /><stop offset=".55" stopColor="#35c3b8" /><stop offset="1" stopColor="#66e04a" /></linearGradient>
              <linearGradient id="e2" x1="0" x2="1" y1="0" y2="1"><stop stopColor="#1ea0e4" /><stop offset="1" stopColor="#0b4f9c" /></linearGradient>
            </defs>
            <path d="M0 15C0 7 6 4 13 7C7 12 6 20 12 24C17 27 24 26 28 22A15 15 0 010 15z" fill="url(#e2)" />
            <path d="M0 14A15 15 0 0130 13C30 19 25 21 20 20C17 19.500 17 18 18.500 16C20 11 15 7 9 8Q3 9 0 14z" fill="url(#e1)" />
            <path d="M9 13Q5 22 13 29.500Q23 31 28 22Q23 25 18 23Q12 20 13 13Z" fill="#0f58a8" />
          </Svg>
        </div>
        <div className={tb}>
          <Svg w={29} h={28} vb="0 0 29 28"><path d="M7 0h22v7H7z" fill="#41a5ee" /><path d="M7 7h22v7H7z" fill="#2b7cd3" /><path d="M7 14h22v7H7z" fill="#185abd" /><path d="M7 21h22v7H7z" fill="#103f91" /><rect y="6" width="15.500" height="15.500" rx="1" fill="#1a53b0" /><path d="M3 9.500l2 8 2.500-8 2.500 8 2-8" stroke="#fff" strokeWidth="1.700" /></Svg>
        </div>
        <div className={tb}>
          <Svg w={30} h={28} vb="0 0 30 28"><path d="M0 9L15 0l15 9z" fill="#0b5fb0" /><path d="M0 9h30v19H0z" fill="#3fc4f5" /><path d="M0 9l30 19H0z" fill="#2a9fe6" /><path d="M2 9h26L15 18z" fill="#fff" /></Svg>
        </div>
        <div className={tb}>
          <div className="flex h-[50px] w-[50px] flex-col items-center rounded-md border border-white/10 bg-white/10 pt-[9px]">
            <Svg w={30} h={30} vb="0 0 30 30">
              <path d="M15 15L2 7.500A15 15 0 0128 7.500H15z" fill="#ea4335" /><path d="M15 15L28 7.500A15 15 0 0115 30l6.500-11.200z" fill="#fbbc04" /><path d="M2 7.500A15 15 0 0015 30l6.500-11.200L15 22 8.500 18.800z" fill="#34a853" /><path d="M15 7.500h13l1 3H15z" fill="#fbbc04" /><circle cx="15" cy="15" r="7.500" fill="#fff" /><circle cx="15" cy="15" r="6" fill="#2f73ea" />
            </Svg>
            <div className="mt-[5px] h-[4px] w-5 shrink-0 rounded-full bg-[#4cc2ff]" />
          </div>
        </div>
        <div className={tb}>
          <div className="flex flex-col items-center pt-[10px]">
            <Svg w={25} h={28} vb="0 0 25 28"><path d="M3 18h19l3 10H0z" fill="#f58a0c" /><path d="M11 0h3l6 21Q12.500 26 5 21z" fill="#e9e9e9" /><path d="M11 0h3l1.200 4.500H9.800zM8.500 9.500h8l1.500 6H7z" fill="#f27c0a" /></Svg>
            <div className="mt-[6px] h-[4px] w-2 rounded-full bg-[#9fb2d8]" />
          </div>
        </div>
      </div>
      <div className="ml-auto flex items-center pb-px pr-[25px]">
        <Svg w={14} h={8} vb="0 0 14 8"><path d="M1 7l6-6 6 6" stroke="#fff" strokeWidth="1.800" /></Svg>
        <Wifi size={22} strokeWidth={1.900} className="ml-[22px]" />
        <Svg w={20} h={18} vb="0 0 20 18" className="ml-[9px]"><path d="M1 6h3.500L9 2v14l-4.500-4H1zM12 6q2 3 0 6M14.500 3.500q4 5.500 0 11M17 1q5.500 8 0 16" stroke="#fff" strokeWidth="1.400" /></Svg>
        <Svg w={21} h={18} vb="0 0 21 18" className="ml-[9px]"><rect x="1" y="4.500" width="16.500" height="11.500" rx="2" stroke="#fff" strokeWidth="1.600" /><path d="M7 7h8.500v7H3.500v-3zM18 8h2.500v4.500H18z" fill="#fff" /><path d="M4 0L0 7h3l-1 5 5-7H4z" fill="#fff" stroke="#24589a" strokeWidth=".6" /></Svg>
        <div className="ml-[20px] flex flex-col items-end pb-px text-[14.500px] leading-[20px]">
          <Fit w={36}>18:18</Fit>
          <Fit w={77}>19/04/2023</Fit>
        </div>
        <div className="ml-[9px] flex h-5 w-5 items-center justify-center rounded-full bg-[#4cc2ff] text-[12px] text-black">1</div>
      </div>
    </footer>
  );
}

export default function App() {
  return (
    <div className="flex h-[1080px] w-[1920px] flex-col overflow-hidden bg-white font-['Open_Sans','Noto_Sans',sans-serif]">
      <TabStrip />
      <AddressBar />
      <Bookmarks />
      <MenuBar />
      <Toolbar />
      <main className="flex h-[805px] shrink-0">
        <Sidebar />
        <section className="flex flex-1 flex-col border-r border-[#d6d8da]">
          <Canvas />
          <PageBar />
        </section>
      </main>
      <Taskbar />
    </div>
  );
}
